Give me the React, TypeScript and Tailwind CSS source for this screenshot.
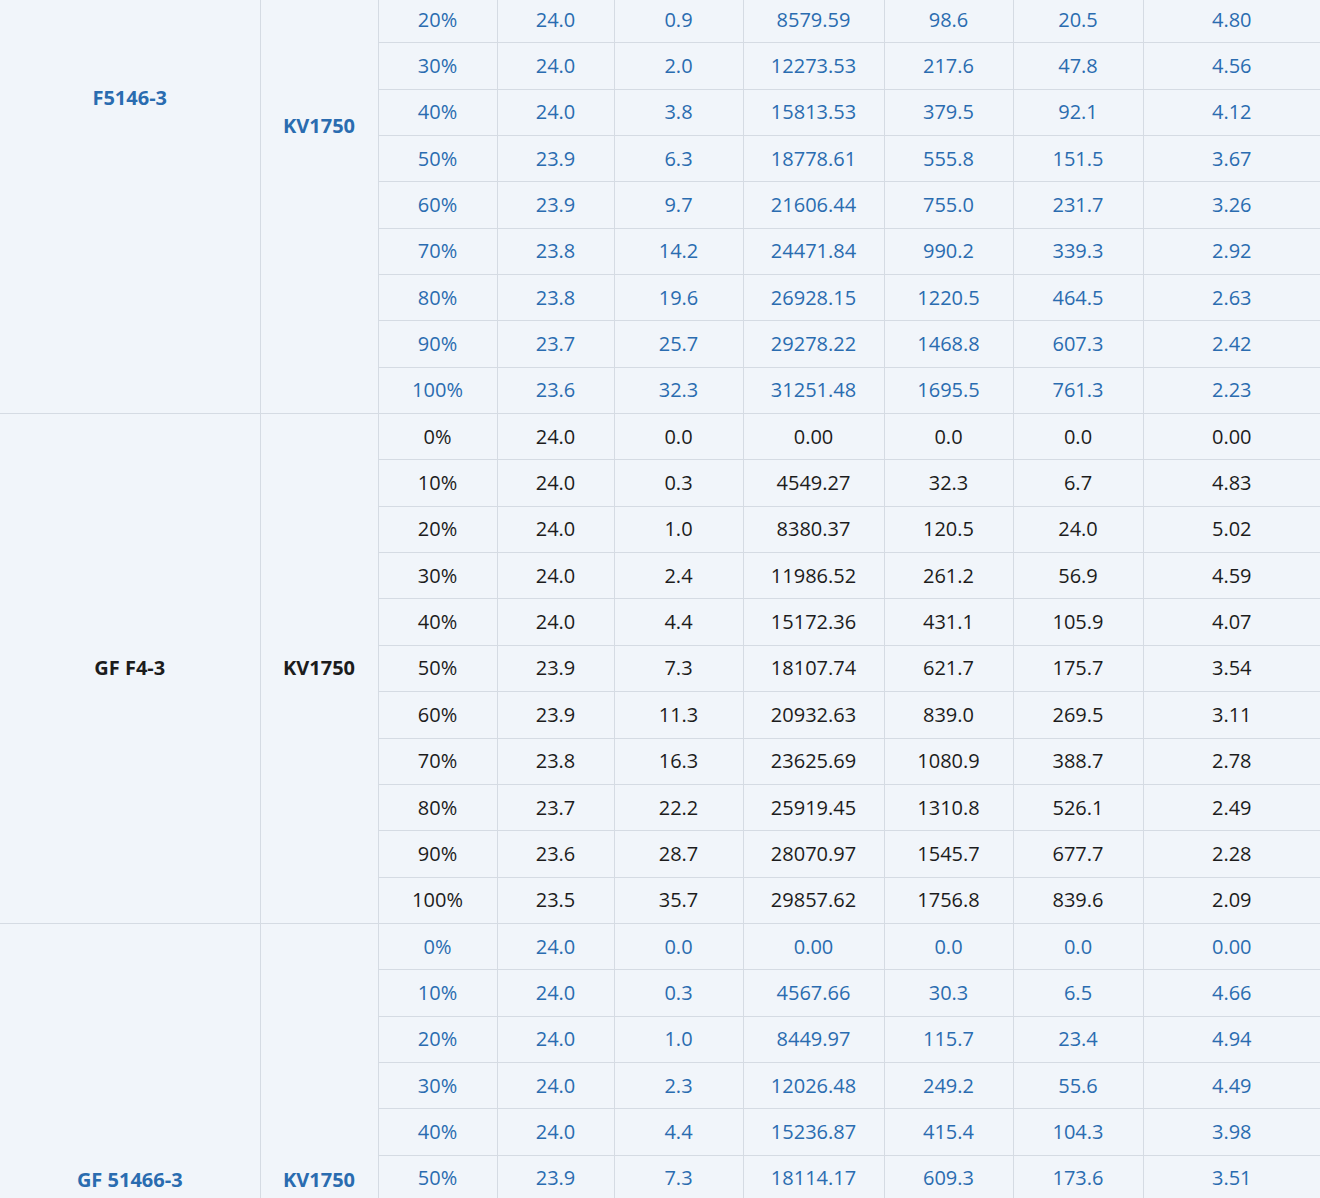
const groups = [
  {
    name: "F5146-3",
    blue: true,
    nameOff: "-mt-[122px]",
    kvOff: "-mt-[94px]",
    rows: [
      ["20%", "24.0", "0.9", "8579.59", "98.6", "20.5", "4.80"],
      ["30%", "24.0", "2.0", "12273.53", "217.6", "47.8", "4.56"],
      ["40%", "24.0", "3.8", "15813.53", "379.5", "92.1", "4.12"],
      ["50%", "23.9", "6.3", "18778.61", "555.8", "151.5", "3.67"],
      ["60%", "23.9", "9.7", "21606.44", "755.0", "231.7", "3.26"],
      ["70%", "23.8", "14.2", "24471.84", "990.2", "339.3", "2.92"],
      ["80%", "23.8", "19.6", "26928.15", "1220.5", "464.5", "2.63"],
      ["90%", "23.7", "25.7", "29278.22", "1468.8", "607.3", "2.42"],
      ["100%", "23.6", "32.3", "31251.48", "1695.5", "761.3", "2.23"],
    ],
  },
  {
    name: "GF F4-3",
    blue: false,
    nameOff: "",
    kvOff: "",
    rows: [
      ["0%", "24.0", "0.0", "0.00", "0.0", "0.0", "0.00"],
      ["10%", "24.0", "0.3", "4549.27", "32.3", "6.7", "4.83"],
      ["20%", "24.0", "1.0", "8380.37", "120.5", "24.0", "5.02"],
      ["30%", "24.0", "2.4", "11986.52", "261.2", "56.9", "4.59"],
      ["40%", "24.0", "4.4", "15172.36", "431.1", "105.9", "4.07"],
      ["50%", "23.9", "7.3", "18107.74", "621.7", "175.7", "3.54"],
      ["60%", "23.9", "11.3", "20932.63", "839.0", "269.5", "3.11"],
      ["70%", "23.8", "16.3", "23625.69", "1080.9", "388.7", "2.78"],
      ["80%", "23.7", "22.2", "25919.45", "1310.8", "526.1", "2.49"],
      ["90%", "23.6", "28.7", "28070.97", "1545.7", "677.7", "2.28"],
      ["100%", "23.5", "35.7", "29857.62", "1756.8", "839.6", "2.09"],
    ],
  },
  {
    name: "GF 51466-3",
    blue: true,
    bottom: true,
    nameOff: "",
    kvOff: "",
    rows: [
      ["0%", "24.0", "0.0", "0.00", "0.0", "0.0", "0.00"],
      ["10%", "24.0", "0.3", "4567.66", "30.3", "6.5", "4.66"],
      ["20%", "24.0", "1.0", "8449.97", "115.7", "23.4", "4.94"],
      ["30%", "24.0", "2.3", "12026.48", "249.2", "55.6", "4.49"],
      ["40%", "24.0", "4.4", "15236.87", "415.4", "104.3", "3.98"],
      ["50%", "23.9", "7.3", "18114.17", "609.3", "173.6", "3.51"],
    ],
  },
];

const widths = [260, 118, 119, 117, 129, 141, 129, 130, 177];

export default function App() {
  return (
    <div className="w-[1320px] h-[1198px] overflow-hidden bg-[#f1f5fa]" style={{ fontFamily: '"Open Sans", "Liberation Sans", sans-serif' }}>
      <table className="-mt-[4px] border-collapse table-fixed w-[1320px] text-[20px]">
        <colgroup>
          {widths.map((w, i) => (
            <col key={i} style={{ width: w }} />
          ))}
        </colgroup>
        <tbody>
          {groups.map((g) =>
            g.rows.map((r, ri) => {
              const color = g.blue ? "text-[#2a6cb0]" : "text-[#1c1c1c]";
              return (
                <tr key={g.name + ri} className="h-[46.35px]">
                  {ri === 0 && (
                    <>
                      <td
                        rowSpan={g.rows.length}
                        className={`border border-[#d5dbe3] border-l-0 text-center font-bold ${g.bottom ? "align-bottom pb-[6px]" : "align-middle"} ${color}`}
                      >
                        <div className={g.nameOff}>{g.name}</div>
                      </td>
                      <td
                        rowSpan={g.rows.length}
                        className={`border border-[#d5dbe3] text-center font-bold ${g.bottom ? "align-bottom pb-[6px]" : "align-middle"} ${color}`}
                      >
                        <div className={g.kvOff}>KV1750</div>
                      </td>
                    </>
                  )}
                  {r.map((c, ci) => (
                    <td key={ci} className={`border border-[#d5dbe3] text-center align-middle p-0 ${ci === 6 ? "border-r-0" : ""} ${color}`}>
                      {c}
                    </td>
                  ))}
                </tr>
              );
            })
          )}
        </tbody>
      </table>
    </div>
  );
}
